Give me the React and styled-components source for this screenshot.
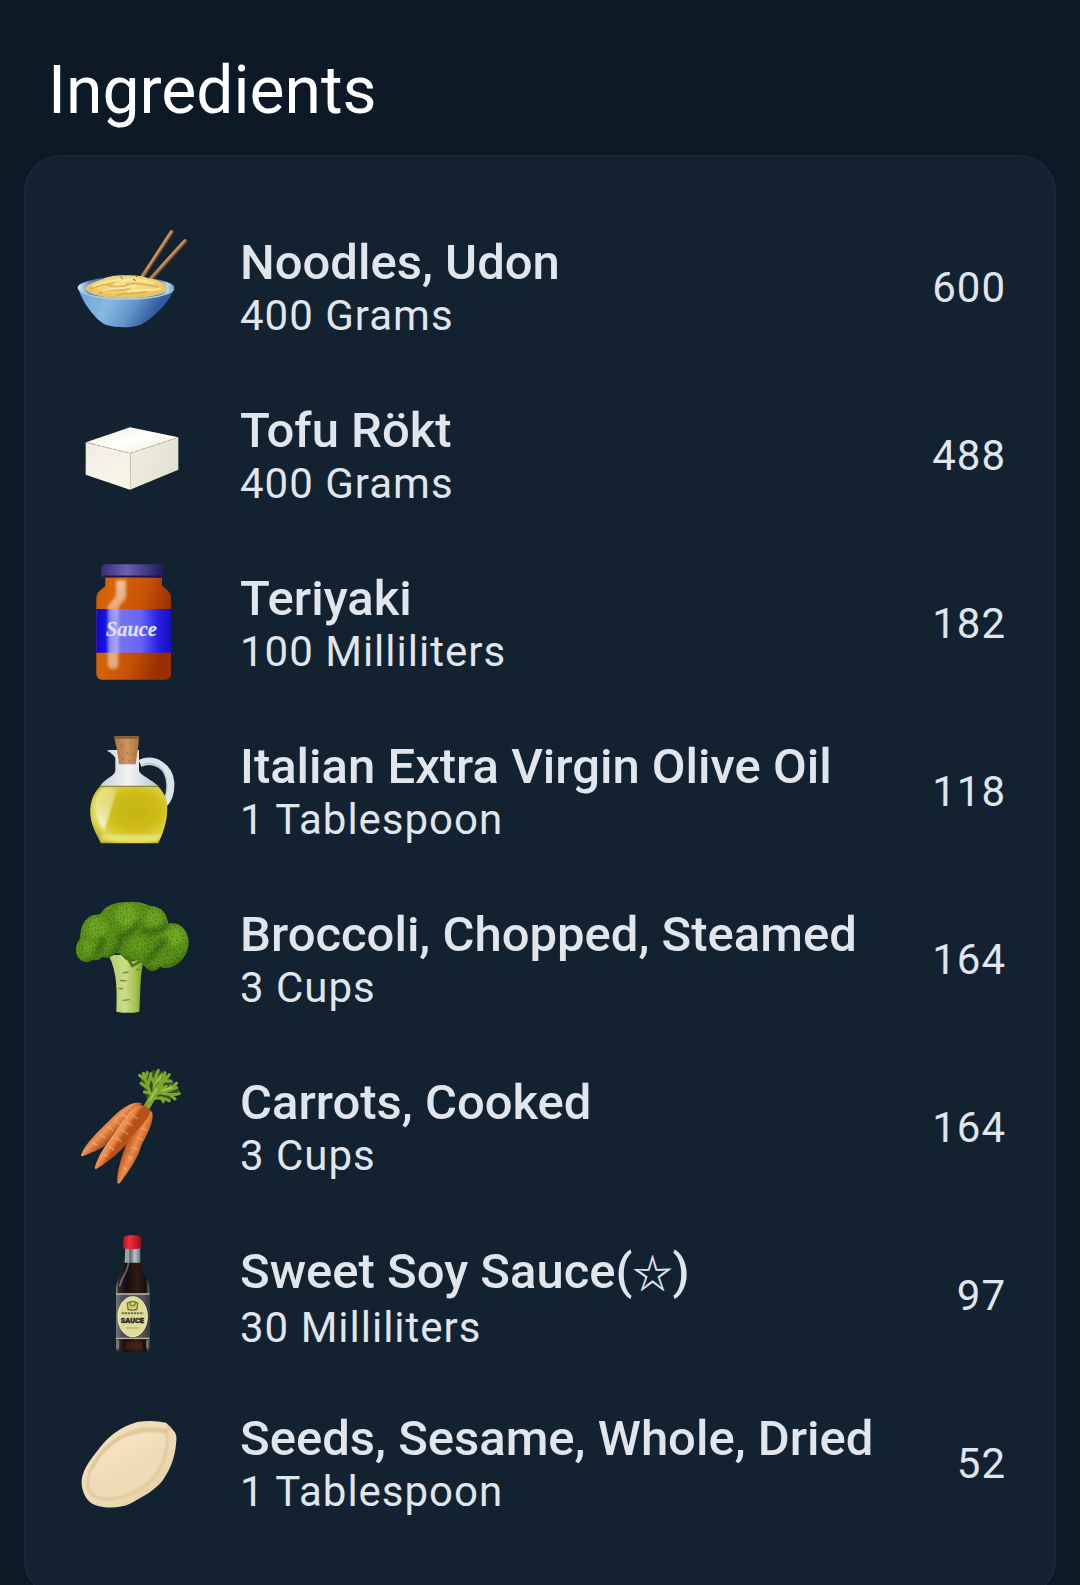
import React from 'react';
import styled, { createGlobalStyle } from 'styled-components';

const GlobalStyle = createGlobalStyle`
  body {
    margin: 0;
    background-color: #0d1927;
  }
`;

const Noodles = () => (
  <svg viewBox="36 36 360 360" aria-hidden="true">
    <defs>
      <linearGradient id="bowl" x1="0" x2="1" y1="0" y2="0.25">
        <stop offset="0" stopColor="#6f9fd6" />
        <stop offset="0.4" stopColor="#86b8e2" />
        <stop offset="0.65" stopColor="#6496cc" />
        <stop offset="0.9" stopColor="#345a9f" />
      </linearGradient>
      <linearGradient id="bowlRim" x1="0" x2="1">
        <stop offset="0" stopColor="#d5ecf8" />
        <stop offset="0.15" stopColor="#4d7eb8" />
        <stop offset="0.8" stopColor="#315d9d" />
        <stop offset="0.93" stopColor="#b5d8ef" />
        <stop offset="1" stopColor="#5f8fc4" />
      </linearGradient>
      <radialGradient id="noodle" cx="0.5" cy="0.4">
        <stop offset="0" stopColor="#f9e496" />
        <stop offset="0.7" stopColor="#f2d377" />
        <stop offset="1" stopColor="#e8c264" />
      </radialGradient>
      <filter id="noodleSoft"><feGaussianBlur stdDeviation="2" /></filter>
    </defs>
    <path d="M54 215C60 250 105 318 142 331C170 339 215 339 240 330C280 310 335 255 343 215Z" fill="url(#bowl)" />
    <ellipse cx="198" cy="218" rx="145" ry="33" fill="url(#bowlRim)" />
    <path d="M57 222C75 262 322 262 341 222" fill="none" stroke="#a9cfea" strokeWidth="4" />
    <g fill="none" strokeLinecap="round">
      <path d="M335 51L243 194M376 78L272 194" stroke="#5c3c28" strokeWidth="13" />
      <path d="M334 50L242 190M374 77L270 192" stroke="#b98150" strokeWidth="9" />
      <path d="M332 50L260 162M372 77L300 156" stroke="#cfa070" strokeWidth="3" />
    </g>
    <path d="M77 220C82 205 112 198 130 192C150 180 188 181 205 181C227 180 245 184 266 190C294 193 315 204 321 220C318 238 270 249 200 250C130 250 82 239 77 220Z" fill="url(#noodle)" />
    <g fill="none" strokeWidth="6" strokeLinecap="round" filter="url(#noodleSoft)">
      <path d="M92 222C120 205 140 212 164 201M118 235C150 214 180 236 210 218M170 241C200 229 225 241 260 229M200 208C230 200 260 212 292 215M136 207C155 216 182 218 205 209" stroke="#d6a548" opacity="0.7" />
      <path d="M100 214C130 200 150 204 180 192M130 228C155 215 192 226 227 211M205 231C240 218 265 231 301 221M187 198C225 188 250 198 279 204" stroke="#fff0ae" opacity="0.7" />
    </g>
    <path d="M181 185l7 5M219 193l8 3M228 184l7-2" stroke="#6d6435" strokeWidth="3" />
  </svg>
);

const Tofu = () => (
  <svg viewBox="36 -15 360 360" aria-hidden="true">
    <defs>
      <linearGradient id="tofuTop" x1="0" x2="1" y2="1">
        <stop offset="0" stopColor="#ebeae2" />
        <stop offset="0.5" stopColor="#fffffb" />
        <stop offset="1" stopColor="#ecebdc" />
      </linearGradient>
      <linearGradient id="tofuLeft" x1="0" x2="0.6" y2="1">
        <stop offset="0" stopColor="#eeede3" />
        <stop offset="1" stopColor="#faf7ea" />
      </linearGradient>
      <linearGradient id="tofuRight" x1="0" x2="1" y2="0.4">
        <stop offset="0" stopColor="#f1eedd" />
        <stop offset="1" stopColor="#e3e2d0" />
      </linearGradient>
    </defs>
    <path d="M78 127L210 82L355 112L211 160Z" fill="url(#tofuTop)" />
    <path d="M77 127L211 160L210 269L77 224Z" fill="url(#tofuLeft)" />
    <path d="M211 160L355 112V209L210 269Z" fill="url(#tofuRight)" />
    <path d="M78 127L211 160L355 112" fill="none" stroke="#b5b4a8" strokeWidth="3" strokeDasharray="10 7" />
    <path d="M211 162V266" stroke="#c9c6b7" strokeWidth="3" />
  </svg>
);

const SauceJar = () => (
  <svg viewBox="6 39 360 360" aria-hidden="true">
    <defs>
      <linearGradient id="jar" x1="0" x2="1" y2="0.3">
        <stop offset="0" stopColor="#c85503" />
        <stop offset="0.2" stopColor="#d96508" />
        <stop offset="0.65" stopColor="#c65206" />
        <stop offset="1" stopColor="#982f02" />
      </linearGradient>
      <linearGradient id="jarLabel" x1="0" x2="1">
        <stop offset="0" stopColor="#0b08d8" />
        <stop offset="0.14" stopColor="#1814df" />
        <stop offset="0.3" stopColor="#7774ef" />
        <stop offset="0.6" stopColor="#6764f6" />
        <stop offset="0.82" stopColor="#2722e4" />
        <stop offset="1" stopColor="#1410ba" />
      </linearGradient>
      <linearGradient id="jarLid" x1="0" x2="1">
        <stop offset="0" stopColor="#34306f" />
        <stop offset="0.4" stopColor="#6c60b4" />
        <stop offset="1" stopColor="#1c1853" />
      </linearGradient>
      <linearGradient id="jarShine" x1="0" x2="0" y2="1">
        <stop offset="0" stopColor="#fff" stopOpacity="0.6" />
        <stop offset="0.45" stopColor="#fff" stopOpacity="0.4" />
        <stop offset="1" stopColor="#fff" stopOpacity="0.5" />
      </linearGradient>
      <filter id="jarSoft"><feGaussianBlur stdDeviation="4" /></filter>
    </defs>
    <path d="M106 78H276V108C288 117 302 124 303 143V370Q303 389 284 389H97Q79 389 79 370V143C80 126 96 117 106 108Z" fill="url(#jar)" />
    <path d="M79 177H303V308H79Z" fill="url(#jarLabel)" />
    <rect x="94" y="43" width="190" height="41" rx="12" fill="url(#jarLid)" />
    <path d="M100 79H279" stroke="#1b174d" strokeWidth="5" />
    <path d="M138 91H168V138C165 158 145 158 145 183V343Q145 357 130 357Q113 357 113 343V177C116 151 140 150 138 126Z" fill="url(#jarShine)" filter="url(#jarSoft)" />
    <text x="108" y="257" fill="#dedeff" stroke="#dedeff" strokeWidth="1" fontFamily="Liberation Serif, serif" fontSize="61" fontWeight="700" fontStyle="italic">Sauce</text>
  </svg>
);

const OliveOil = () => (
  <svg viewBox="6 18 360 360" aria-hidden="true">
    <defs>
      <radialGradient id="oil" cx="0.58" cy="0.43" r="0.65">
        <stop offset="0" stopColor="#c5b315" />
        <stop offset="0.5" stopColor="#cfbc19" />
        <stop offset="0.85" stopColor="#dfd64e" />
        <stop offset="1" stopColor="#bcae25" />
      </radialGradient>
      <linearGradient id="cork" x1="0" x2="1">
        <stop offset="0" stopColor="#ad733c" />
        <stop offset="0.55" stopColor="#cf965f" />
        <stop offset="1" stopColor="#aa7040" />
      </linearGradient>
      <linearGradient id="glass" x1="0" x2="1">
        <stop offset="0" stopColor="#c7d1d8" />
        <stop offset="0.5" stopColor="#f1f3f5" />
        <stop offset="1" stopColor="#bac5ce" />
      </linearGradient>
      <linearGradient id="oilShine" x1="0" x2="0" y2="1">
        <stop offset="0" stopColor="#fff" stopOpacity="0.25" />
        <stop offset="1" stopColor="#fff" stopOpacity="0.75" />
      </linearGradient>
      <filter id="oilSoft"><feGaussianBlur stdDeviation="3" /></filter>
    </defs>
    <path d="M210 115C254 96 298 126 302 173Q304 213 284 235" fill="none" stroke="#dce3e9" strokeWidth="22" />
    <path d="M215 119C253 106 286 128 290 173Q293 202 282 223" fill="none" stroke="#b3bfca" strokeWidth="4" />
    <path d="M113 75H207V137C213 154 247 163 265 184H90C105 159 134 154 136 137V100Q129 86 113 79Z" fill="url(#glass)" />
    <path d="M91 184H264C287 207 295 233 291 269C288 301 275 335 264 355H93C76 323 62 298 61 265C59 230 72 202 91 184Z" fill="url(#oil)" />
    <path d="M91 184H264" stroke="#8f8a32" strokeWidth="4" />
    <path d="M96 349H262L270 329H88Z" fill="#efeb8c" opacity="0.6" filter="url(#oilSoft)" />
    <path d="M98 190H139C132 231 119 266 103 315C86 302 73 269 75 242Q77 211 98 190Z" fill="url(#oilShine)" filter="url(#oilSoft)" />
    <path d="M132 34H207C206 66 200 95 197 118H147C144 87 138 61 132 34Z" fill="url(#cork)" />
    <path d="M132 34H207L206 41H134Z" fill="#8c5a30" />
    <path d="M151 60l7 4M178 53l5 6M169 82l6 3M187 91l6-3M156 103l6-2M176 107l7 2" stroke="#85532e" strokeWidth="4" opacity="0.5" />
  </svg>
);

const Broccoli = () => (
  <svg viewBox="36 27 360 360" aria-hidden="true">
    <defs>
      <linearGradient id="stem" x1="0" x2="1">
        <stop offset="0" stopColor="#b2c76e" />
        <stop offset="0.45" stopColor="#cddd85" />
        <stop offset="0.75" stopColor="#a3c04c" />
        <stop offset="1" stopColor="#68911e" />
      </linearGradient>
      <filter id="floretSoft"><feGaussianBlur stdDeviation="7" /></filter>
      <pattern id="buds" width="31" height="29" patternUnits="userSpaceOnUse" patternTransform="rotate(17)">
        <g fill="#2c5d08">
          <circle cx="4" cy="5" r="2" />
          <circle cx="13" cy="2" r="2" />
          <circle cx="23" cy="6" r="3" />
          <circle cx="9" cy="13" r="3" />
          <circle cx="18" cy="15" r="2" />
          <circle cx="28" cy="17" r="2" />
          <circle cx="3" cy="22" r="2" />
          <circle cx="13" cy="24" r="2" />
          <circle cx="22" cy="24" r="3" />
        </g>
        <g fill="#84b531">
          <circle cx="8" cy="7" r="2" />
          <circle cx="18" cy="8" r="2" />
          <circle cx="25" cy="12" r="2" />
          <circle cx="13" cy="18" r="2" />
          <circle cx="7" cy="26" r="2" />
          <circle cx="27" cy="25" r="2" />
        </g>
      </pattern>
      <clipPath id="crown">
        <path d="M67 213C45 202 40 170 61 145C60 118 67 96 88 80C103 72 116 77 123 70C135 49 161 37 194 37C225 32 253 38 272 49C304 48 321 72 325 101C356 94 383 116 386 153C387 191 362 221 332 232C318 235 307 232 299 230C288 247 265 245 257 231C246 225 245 211 234 211C222 215 213 216 201 211C188 202 182 188 166 189C152 208 136 201 126 201C119 211 104 213 98 208C91 218 76 216 67 213Z" />
      </clipPath>
    </defs>
    <path d="M145 195H256C239 242 242 305 238 365Q205 372 169 365C171 309 173 246 145 195Z" fill="url(#stem)" />
    <path d="M188 249l18-3M179 271l20 2M176 295l13 2M188 331l22-2M228 240l12-3" stroke="#768c42" strokeWidth="4" />
    <path d="M207 211L217 228L250 208" fill="none" stroke="#4d731b" strokeWidth="8" />
    <g clipPath="url(#crown)">
      <rect x="36" y="27" width="360" height="225" fill="#588d19" />
      <g filter="url(#floretSoft)">
        <circle cx="200" cy="75" r="34" fill="#6fa823" />
        <circle cx="110" cy="115" r="32" fill="#6ca522" />
        <circle cx="282" cy="85" r="26" fill="#6da522" />
        <circle cx="345" cy="140" r="28" fill="#73aa27" />
        <circle cx="83" cy="170" r="20" fill="#66a01f" />
        <circle cx="235" cy="165" r="22" fill="#659d1e" />
        <path d="M160 186C177 178 184 161 180 139C203 137 221 124 231 99M262 211C284 195 295 161 320 151M106 189C123 175 129 161 125 143M250 120C270 135 290 120 318 108" fill="none" stroke="#316209" strokeWidth="14" strokeLinecap="round" />
        <path d="M67 220C100 213 130 210 166 194C190 214 240 215 257 238C290 247 340 235 386 190" fill="none" stroke="#396c0c" strokeWidth="16" />
      </g>
      <rect x="36" y="27" width="360" height="225" fill="url(#buds)" opacity="0.6" />
    </g>
  </svg>
);

const Carrots = () => (
  <svg viewBox="36 21 360 360" aria-hidden="true">
    <defs>
      <linearGradient id="carrot" gradientUnits="userSpaceOnUse" x1="150" x2="187" y1="210" y2="235">
        <stop offset="0" stopColor="#cf6a2e" />
        <stop offset="0.35" stopColor="#f09c5e" />
        <stop offset="0.7" stopColor="#e88644" />
        <stop offset="1" stopColor="#b9501b" />
      </linearGradient>
      <linearGradient id="carrotLeft" gradientUnits="userSpaceOnUse" x1="125" x2="160" y1="195" y2="230">
        <stop offset="0" stopColor="#d87737" />
        <stop offset="0.4" stopColor="#ec9457" />
        <stop offset="1" stopColor="#ad4816" />
      </linearGradient>
      <linearGradient id="carrotRight" gradientUnits="userSpaceOnUse" x1="205" x2="252" y1="240" y2="260">
        <stop offset="0" stopColor="#c0551d" />
        <stop offset="0.5" stopColor="#ec8c49" />
        <stop offset="1" stopColor="#b9531f" />
      </linearGradient>
    </defs>
    <path d="M262 118C252 102 257 87 244 71Q240 50 250 34L264 44L278 30L298 35L317 33L322 50L339 64L349 75L361 96L353 106L335 104L331 124L315 117L304 124L289 111L276 132Z" fill="#547d1c" opacity="0.5" />
    <g fill="none" stroke="#7da82c" strokeLinecap="round">
      <path d="M260 142C273 119 284 98 300 78" strokeWidth="20" />
      <path d="M276 112C264 85 258 65 250 40M283 101C279 67 286 48 295 31M289 96C303 72 316 58 328 44M286 103C309 95 328 91 350 83M278 116C300 111 314 114 328 122M295 97C323 104 340 107 358 101" strokeWidth="9" />
      <path d="M263 84L243 70M263 78L273 41M254 59L239 46M283 71L275 54M288 62L306 44M302 74L300 49M313 62L333 64M316 96L333 78M330 91L350 69M331 105L345 117M304 113L310 125M271 99L253 96M299 92L319 79M308 67L315 38M258 50L262 37" strokeWidth="9" />
      <path d="M270 120L290 87M287 72L303 50M306 91L336 83" stroke="#a5c84c" strokeWidth="5" />
    </g>
    <path d="M244 130C212 122 180 149 146 184C112 217 78 249 63 284Q62 291 70 288C102 276 133 263 160 237C196 204 235 172 244 130Z" fill="url(#carrotLeft)" />
    <path d="M270 151C245 157 213 207 200 246C189 283 170 328 172 368Q175 375 182 366C207 332 233 297 245 254C261 226 285 180 276 157Z" fill="url(#carrotRight)" />
    <path d="M235 138C211 145 186 185 163 220C139 254 116 283 104 323Q105 330 113 325C151 300 184 276 211 235C234 207 260 184 272 155Q259 130 235 138Z" fill="url(#carrot)" />
    <path d="M187 164l13 8M166 184l14 9M145 201l14 9M120 224l14 10M99 248l11 7M218 166l13 9M201 187l17 10M185 210l18 12M169 234l15 10M147 260l15 9M132 284l9 5M246 205l14 6M231 232l15 6M216 262l15 6M205 291l12 5M190 324l9 4" stroke="#ffc595" strokeWidth="5" strokeLinecap="round" opacity="0.4" />
    <path d="M190 174l9 4M159 205l10 6M126 237l9 6M213 192l12 7M179 231l10 6M150 271l9 5M238 231l12 4M214 280l10 4M197 315l8 3" stroke="#b94e1c" strokeWidth="3" opacity="0.4" />
  </svg>
);

const SoySauce = () => (
  <svg viewBox="-24 30 360 360" aria-hidden="true">
    <defs>
      <linearGradient id="soy" x1="0" x2="1">
        <stop offset="0" stopColor="#8b8988" />
        <stop offset="0.08" stopColor="#34292b" />
        <stop offset="0.3" stopColor="#160b0e" />
        <stop offset="0.65" stopColor="#321915" />
        <stop offset="0.9" stopColor="#160e13" />
        <stop offset="1" stopColor="#777374" />
      </linearGradient>
      <linearGradient id="soyCap" x1="0" x2="1">
        <stop offset="0" stopColor="#a71925" />
        <stop offset="0.35" stopColor="#f3303b" />
        <stop offset="0.7" stopColor="#ca1b2c" />
        <stop offset="1" stopColor="#8b101b" />
      </linearGradient>
      <linearGradient id="soyNeck" x1="0" x2="1">
        <stop offset="0" stopColor="#b6bbc0" />
        <stop offset="0.35" stopColor="#5c6570" />
        <stop offset="0.65" stopColor="#bbc5cf" />
        <stop offset="1" stopColor="#6a727b" />
      </linearGradient>
      <linearGradient id="soyLabel" x1="0" x2="1">
        <stop offset="0" stopColor="#77787a" />
        <stop offset="0.2" stopColor="#4d4e52" />
        <stop offset="0.8" stopColor="#55565a" />
        <stop offset="1" stopColor="#38393e" />
      </linearGradient>
    </defs>
    <path d="M136 71H181C180 109 183 137 202 165Q208 177 208 196V366Q207 380 197 380H119Q108 380 108 366V190C109 160 137 133 136 96Z" fill="url(#soy)" />
    <path d="M136 67H181V113H134Z" fill="url(#soyNeck)" />
    <path d="M145 72V116C141 145 124 157 119 184" fill="none" stroke="#d5d6d6" strokeWidth="6" opacity="0.4" />
    <path d="M131 35Q157 25 183 35L184 69Q157 77 129 69Z" fill="url(#soyCap)" />
    <path d="M108 205H208V343H108Z" fill="url(#soyLabel)" />
    <path d="M108 207H208M108 340H208" stroke="#b7b5a0" strokeWidth="4" />
    <ellipse cx="158" cy="275" rx="44" ry="60" fill="#dedc96" stroke="#f5f2bd" strokeWidth="3" />
    <path d="M142 234Q157 225 173 234L171 253Q157 258 144 253ZM149 233L153 242L161 242L168 234" fill="#d2cb73" stroke="#777439" strokeWidth="4" />
    <path d="M125 265H190" stroke="#757447" strokeWidth="6" strokeDasharray="7 2" />
    <text x="157" y="294" fill="#252624" stroke="#252624" strokeWidth="1" textAnchor="middle" fontFamily="Roboto, sans-serif" fontSize="22" fontWeight="900">SAUCE</text>
    <path d="M138 309H177" stroke="#b5b270" strokeWidth="4" />
    <path d="M115 346V371M201 346V370" stroke="#b6adaa" strokeWidth="5" opacity="0.6" />
    <path d="M136 349H187V374H136Z" fill="#56251b" opacity="0.6" />
  </svg>
);

const Seed = () => (
  <svg viewBox="36 -6 360 360" aria-hidden="true">
    <defs>
      <linearGradient id="shell" x1="0" x2="1" y2="1">
        <stop offset="0" stopColor="#f6e4c0" />
        <stop offset="0.65" stopColor="#ecd9b2" />
        <stop offset="1" stopColor="#dfc596" />
      </linearGradient>
      <linearGradient id="kernel" x1="0.2" x2="0.8" y2="1">
        <stop offset="0" stopColor="#fae8c6" />
        <stop offset="0.6" stopColor="#eddbb8" />
        <stop offset="1" stopColor="#f0deba" />
      </linearGradient>
      <filter id="seedSoft"><feGaussianBlur stdDeviation="3" /></filter>
    </defs>
    <path d="M232 51Q275 44 318 53Q330 63 344 81Q352 91 348 118C345 153 333 191 309 225C286 256 247 276 210 296C175 313 115 310 92 293C77 281 63 257 65 225C70 188 97 157 121 126C151 88 189 63 232 51Z" fill="url(#shell)" />
    <path d="M215 82C248 70 285 69 316 76C327 99 321 137 309 169C293 216 262 242 221 261C177 284 123 289 98 270C78 251 79 222 94 189C119 136 166 98 215 82Z" fill="url(#kernel)" stroke="#dcc496" strokeWidth="7" filter="url(#seedSoft)" />
    <path d="M97 190C127 133 170 98 216 87C247 76 281 76 312 81L330 70" fill="none" stroke="#d8bd8d" strokeWidth="5" filter="url(#seedSoft)" />
  </svg>
);

const ingredients = [
  { name: 'Noodles, Udon', amount: '400 Grams', calories: 600, Icon: Noodles },
  { name: 'Tofu Rökt', amount: '400 Grams', calories: 488, Icon: Tofu },
  { name: 'Teriyaki', amount: '100 Milliliters', calories: 182, Icon: SauceJar },
  { name: 'Italian Extra Virgin Olive Oil', amount: '1 Tablespoon', calories: 118, Icon: OliveOil },
  { name: 'Broccoli, Chopped, Steamed', amount: '3 Cups', calories: 164, Icon: Broccoli },
  { name: 'Carrots, Cooked', amount: '3 Cups', calories: 164, Icon: Carrots },
  { name: 'Sweet Soy Sauce', starred: true, amount: '30 Milliliters', calories: 97, Icon: SoySauce },
  { name: 'Seeds, Sesame, Whole, Dried', amount: '1 Tablespoon', calories: 52, Icon: Seed },
];

function App() {
  return (
    <Page>
      <GlobalStyle />
      <Title>Ingredients</Title>
      <Card>
        {ingredients.map(({ name, starred, amount, calories, Icon }) => (
          <Row key={name}>
            <Picture><Icon /></Picture>
            <Details>
              <Name>
                {name}
                {starred && <>(<Star>☆</Star>)</>}
              </Name>
              <Amount>{amount}</Amount>
            </Details>
            <Calories>{calories}</Calories>
          </Row>
        ))}
      </Card>
    </Page>
  );
}

const Page = styled.main`
  box-sizing: border-box;
  height: 100vh;
  overflow: hidden;
  padding: 52px 24px 0;
  font-family: Roboto, 'Noto Sans CJK JP', sans-serif;
  color: #e1e5ec;
`;

const Title = styled.h1`
  margin: 0 0 25px;
  padding: 0 24px;
  color: #fff;
  font-size: 66px;
  font-weight: 400;
  line-height: 78px;
`;

const Card = styled.ul`
  margin: 0;
  padding: 46px 48px 48px 46px;
  list-style: none;
  background-color: #132231;
  border: 2px solid #1a2735;
  border-radius: 36px;
`;

const Row = styled.li`
  display: flex;
  align-items: center;
  gap: 48px;
  height: 168px;
`;

const Picture = styled.div`
  flex: none;
  width: 120px;
  height: 120px;

  svg {
    display: block;
    width: 100%;
    height: 100%;
  }
`;

const Details = styled.div`
  flex: 1;
  min-width: 0;
`;

const Name = styled.div`
  font-size: 49px;
  font-weight: 500;
  line-height: 56px;
`;

const Amount = styled.div`
  font-size: 42px;
  line-height: 49px;
  letter-spacing: 1px;
`;

const Calories = styled(Amount)`
  flex: none;
`;

const Star = styled.span`
  font-family: 'Noto Sans CJK JP', sans-serif;
  font-size: 40px;
  font-weight: 700;
  line-height: 64px;
`;

export default App;
